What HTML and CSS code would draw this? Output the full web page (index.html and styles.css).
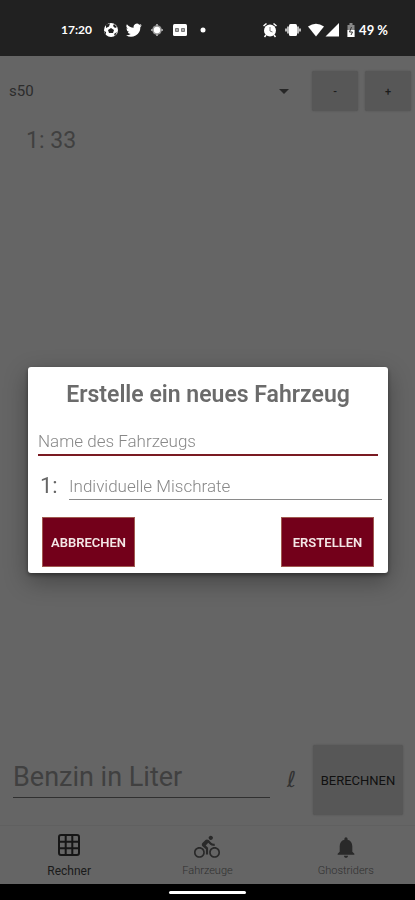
FILE: index.html
```html
<!DOCTYPE html>
<html lang="de">
<head>
<meta charset="utf-8">
<meta name="viewport" content="width=device-width, initial-scale=1">
<title>Rechner</title>
<link rel="stylesheet" href="styles.css">
</head>
<body>
<header class="status">
  <div class="status-group">
    <span class="clock">17:20</span>
    <svg class="status-icon" viewBox="0 0 16 16"><circle cx="8" cy="8" r="7" fill="#fff"/><path d="M8 6l3 2-1 3H6L5 8zM3 2.500l4-1-1 3-3 1.500zM11 2l3 3-2 1-2-2zM1 9l2 1v3zM11 12l3-2-2 4z" fill="#222"/></svg>
    <svg class="status-icon" viewBox="0 0 24 24"><path fill="#fff" d="M23.600 4.900a9.700 9.700 0 0 1-2.800.8 4.900 4.900 0 0 0 2.200-2.700 9.900 9.900 0 0 1-3.100 1.200 4.900 4.900 0 0 0-8.400 4.500A14 14 0 0 1 1.400 3.500a4.900 4.900 0 0 0 1.500 6.600 4.900 4.900 0 0 1-2.200-.6 4.900 4.900 0 0 0 3.900 4.900 5 5 0 0 1-2.200.1 4.900 4.900 0 0 0 4.600 3.400A9.900 9.900 0 0 1 0 19.900a14 14 0 0 0 21.500-12.400 10 10 0 0 0 2.100-2.600z"/></svg>
    <svg class="status-icon" viewBox="0 0 16 16"><circle cx="8" cy="8" r="4.800" fill="#999"/><path d="M8 2v12M2 8h12" stroke="#999" stroke-width="2"/><circle cx="8" cy="8" r="3.200" fill="#fff"/></svg>
    <svg class="status-icon" viewBox="0 0 16 16"><rect x="1" y="2" width="14" height="12" rx="1.500" fill="#fff"/><path d="M3.500 6.500h3v3h-3zM9.500 6.500h3v3h-3z" fill="#aaa" stroke="#777"/></svg>
    <svg class="status-icon" viewBox="0 0 16 16"><circle cx="8" cy="8" r="2.500" fill="#fff"/></svg>
  </div>
  <div class="status-group status-right">
    <svg class="status-icon" viewBox="0 0 16 16"><circle cx="8" cy="8.500" r="6" fill="#fff"/><path d="M1.500 4l3-2.500M14.500 4l-3-2.500M4 13l-1.500 2M12 13l1.500 2" stroke="#fff" stroke-width="1.500"/><path d="M8 5v4l2.500 1" fill="none" stroke="#777"/></svg>
    <svg class="status-icon" viewBox="0 0 16 16"><rect x="4" y="2" width="8" height="12" rx="1.500" fill="#fff"/><path d="M3 4.500v7M13 4.500v7M1 6.500v3M15 6.500v3" stroke="#bbb" stroke-width="2"/></svg>
    <span class="signals">
      <svg class="status-icon" viewBox="0 0 16 16"><path d="M0 4.500Q8-1 16 4.500L8 14.500z" fill="#fff"/></svg>
      <svg class="status-icon" viewBox="0 0 16 16"><path d="M15 1v13.500H1.500z" fill="#fff"/></svg>
    </span>
    <span class="battery">
      <svg class="battery-icon" viewBox="0 0 8 16"><path d="M2.500 1h3v2h2v12h-7V3h2z" fill="#888"/><path d="M.5 8h7v7h-7z" fill="#fff"/><path d="M4.500 5L2.500 10h3l-1.500 3" fill="none" stroke="#333"/></svg>
      <span class="level">49 %</span>
    </span>
  </div>
</header>

<main class="screen">
  <div class="vehicle-row">
    <div class="picker">
      <select class="vehicle" aria-label="Fahrzeug"><option>s50</option></select>
      <svg class="arrow" viewBox="0 0 10 5"><path d="M0 0h10L5 5z" fill="#272727"/></svg>
    </div>
    <button class="tile small" type="button">-</button>
    <button class="tile small" type="button">+</button>
  </div>
  <p class="ratio">1: 33</p>
  <div class="fuel-row">
    <input class="fuel" type="text" placeholder="Benzin in Liter" aria-label="Benzin in Liter">
    <span class="unit">ℓ</span>
    <button class="tile large" type="button">BERECHNEN</button>
  </div>
</main>

<nav class="tabs">
  <a class="tab active" href="#rechner">
    <svg class="tab-icon" viewBox="-1 1 26 26"><rect x="2" y="2" width="20" height="20" rx="2" fill="none" stroke="#161616" stroke-width="2"/><path d="M8.700 2v20M15.300 2v20M2 8.700h20M2 15.300h20" stroke="#161616" stroke-width="2"/></svg>
    <span>Rechner</span>
  </a>
  <a class="tab" href="#fahrzeuge">
    <svg class="tab-icon" viewBox="0 0 24 24"><path fill="#292929" d="M15.500 5.500c1.100 0 2-.9 2-2s-.9-2-2-2-2 .9-2 2 .9 2 2 2zM5 12c-2.800 0-5 2.200-5 5s2.200 5 5 5 5-2.200 5-5-2.200-5-5-5zm0 8.500c-1.900 0-3.500-1.600-3.500-3.500s1.600-3.500 3.500-3.500 3.500 1.600 3.500 3.500-1.600 3.500-3.500 3.500zm5.800-10l2.400-2.400.8.800c1.300 1.300 3 2.100 5.100 2.100V9c-1.500 0-2.700-.6-3.600-1.500l-1.900-1.900c-.5-.4-1-.6-1.600-.6s-1.100.2-1.400.6L7.800 8.400c-.4.400-.6.900-.6 1.400 0 .6.200 1.100.6 1.400L11 14v5h2v-6.200l-2.200-2.300zM19 12c-2.800 0-5 2.200-5 5s2.200 5 5 5 5-2.200 5-5-2.200-5-5-5zm0 8.500c-1.900 0-3.500-1.600-3.500-3.500s1.600-3.500 3.500-3.500 3.500 1.600 3.500 3.500-1.600 3.500-3.500 3.500z"/></svg>
    <span>Fahrzeuge</span>
  </a>
  <a class="tab" href="#ghostriders">
    <svg class="tab-icon" viewBox="-2 -2 28 28"><path fill="#292929" d="M12 23.500c1.200 0 2.200-1 2.200-2.200H9.800c0 1.200 1 2.200 2.200 2.200zm6.800-6.500v-5.800c0-3.500-1.900-6.200-5.100-7V3.300c0-1-.7-1.800-1.700-1.800s-1.700.8-1.700 1.800v.9c-3.200.8-5.100 3.500-5.100 7V17L3 19.200v1.100h18v-1.100z"/></svg>
    <span>Ghostriders</span>
  </a>
</nav>
<footer class="system"><span class="handle"></span></footer>

<div class="overlay">
  <form class="dialog" role="dialog" aria-labelledby="dialog-title">
    <h1 class="title" id="dialog-title">Erstelle ein neues Fahrzeug</h1>
    <input class="field name" type="text" placeholder="Name des Fahrzeugs" aria-label="Name des Fahrzeugs">
    <div class="rate-row">
      <label class="rate-label" for="rate">1:</label>
      <input class="field" id="rate" type="text" placeholder="Individuelle Mischrate">
    </div>
    <div class="actions">
      <button class="action" type="button">ABBRECHEN</button>
      <button class="action" type="button">ERSTELLEN</button>
    </div>
  </form>
</div>
</body>
</html>
```
FILE: styles.css
```css
* { box-sizing: border-box; }

body {
  margin: 0;
  min-height: 100vh;
  display: flex;
  flex-direction: column;
  background: #656565;
  font-family: Roboto, "Liberation Sans", sans-serif;
}

button, input, select {
  font-family: inherit;
  margin: 0;
  border: 0;
  border-radius: 0;
  outline: 0;
}

svg { display: block; flex: none; }

/* Status bar */
.status {
  display: flex;
  justify-content: space-between;
  align-items: center;
  height: 56px;
  padding: 4px 27px 0 61px;
  background: #212121;
  color: #fff;
}
.status-group { display: flex; align-items: center; gap: 7px; }
.clock { margin-right: 4px; font: 700 12px/16px Lato, sans-serif; }
.level { font: 700 13px/16px Lato, sans-serif; white-space: nowrap; }
.status-icon { width: 16px; height: 16px; }
.signals, .battery { display: flex; align-items: center; }
.battery { gap: 4px; }
.battery-icon { width: 8px; height: 16px; }

/* Calculator */
.screen { flex: 1; display: flex; flex-direction: column; }
.vehicle-row {
  display: flex;
  align-items: center;
  gap: 7px;
  padding: 15px 4px 0 9px;
}
.picker { flex: 1; display: flex; align-items: center; padding-right: 16px; }
.vehicle {
  flex: 1;
  min-width: 0;
  appearance: none;
  padding: 0;
  background: transparent;
  color: #2c2c2c;
  font-size: 15px;
  line-height: 40px;
}
.arrow { width: 10px; height: 5px; }
.tile {
  padding: 0;
  border-radius: 2px;
  background: #575757;
  color: #1c1c1c;
  font-size: 13px;
  font-weight: 500;
  box-shadow: 0 0 2px #505050;
}
.small { width: 46px; height: 40px; font-size: 11px; }
.large { width: 90px; height: 70px; color: #101010; font-weight: 400; }
.ratio {
  margin: 16px 26px;
  color: #404040;
  font-size: 23px;
  line-height: 28px;
}
.fuel-row {
  display: flex;
  align-items: center;
  margin-top: auto;
  padding: 0 12px 10px 13px;
}
.fuel {
  flex: 1;
  min-width: 0;
  height: 44px;
  margin-bottom: 8px;
  padding: 2px 0 0;
  border-bottom: 1px solid #303030;
  background: transparent;
  color: #404040;
  font-size: 27px;
}
.fuel::placeholder { color: #404040; opacity: 1; }
.unit { width: 43px; text-align: center; color: #333; font: 22px/28px "DejaVu Sans", sans-serif; }

/* Bottom navigation */
.tabs { display: flex; height: 59px; border-top: 1px solid #606060; }
.tab {
  flex: 1;
  display: flex;
  flex-direction: column;
  align-items: center;
  gap: 3px;
  padding-top: 8px;
  color: #303030;
  font-size: 11px;
  font-weight: 300;
  line-height: 16px;
  text-decoration: none;
}
.active { color: #1a1a1a; font-size: 12px; font-weight: 400; }
.tab-icon { width: 26px; height: 26px; }
.system {
  display: flex;
  justify-content: center;
  align-items: center;
  height: 16px;
  background: #000;
}
.handle { width: 77px; height: 3px; border-radius: 2px; background: #fff; }

/* Dialog */
.overlay {
  position: fixed;
  inset: 56px 0 16px;
  display: flex;
  align-items: center;
  padding: 0 27px 0 28px;
}
.dialog {
  flex: 1;
  min-width: 0;
  padding: 12px 6px 6px 10px;
  border-radius: 3px;
  background: #fff;
  box-shadow: 0 8px 24px #0005, 0 2px 4px #0006;
}
.title {
  margin: 0 4px 14px 0;
  color: #6b6b6b;
  font-size: 23px;
  font-weight: 600;
  line-height: 32px;
  text-align: center;
}
.field {
  display: block;
  width: 100%;
  min-width: 0;
  height: 31px;
  padding: 3px 0 0;
  border-bottom: 1px solid #8a8a8a;
  background: transparent;
  color: #666;
  font-size: 17px;
  font-weight: 300;
}
.field::placeholder { color: #888; opacity: 1; }
.name { width: calc(100% - 4px); border-bottom: 2px solid #7a1a22; }
.rate-row { display: flex; align-items: center; margin-top: 13px; }
.rate-label { flex: none; width: 31px; padding: 3px 0 0 2px; color: #666; font-size: 22px; line-height: 28px; }
.actions { display: flex; justify-content: space-between; padding: 17px 8px 0 4px; }
.action {
  width: 93px;
  height: 50px;
  padding: 0;
  border: 1px solid #a05a50;
  background: #73001a;
  color: #f4e6e6;
  font-size: 13px;
  font-weight: 600;
}
```
